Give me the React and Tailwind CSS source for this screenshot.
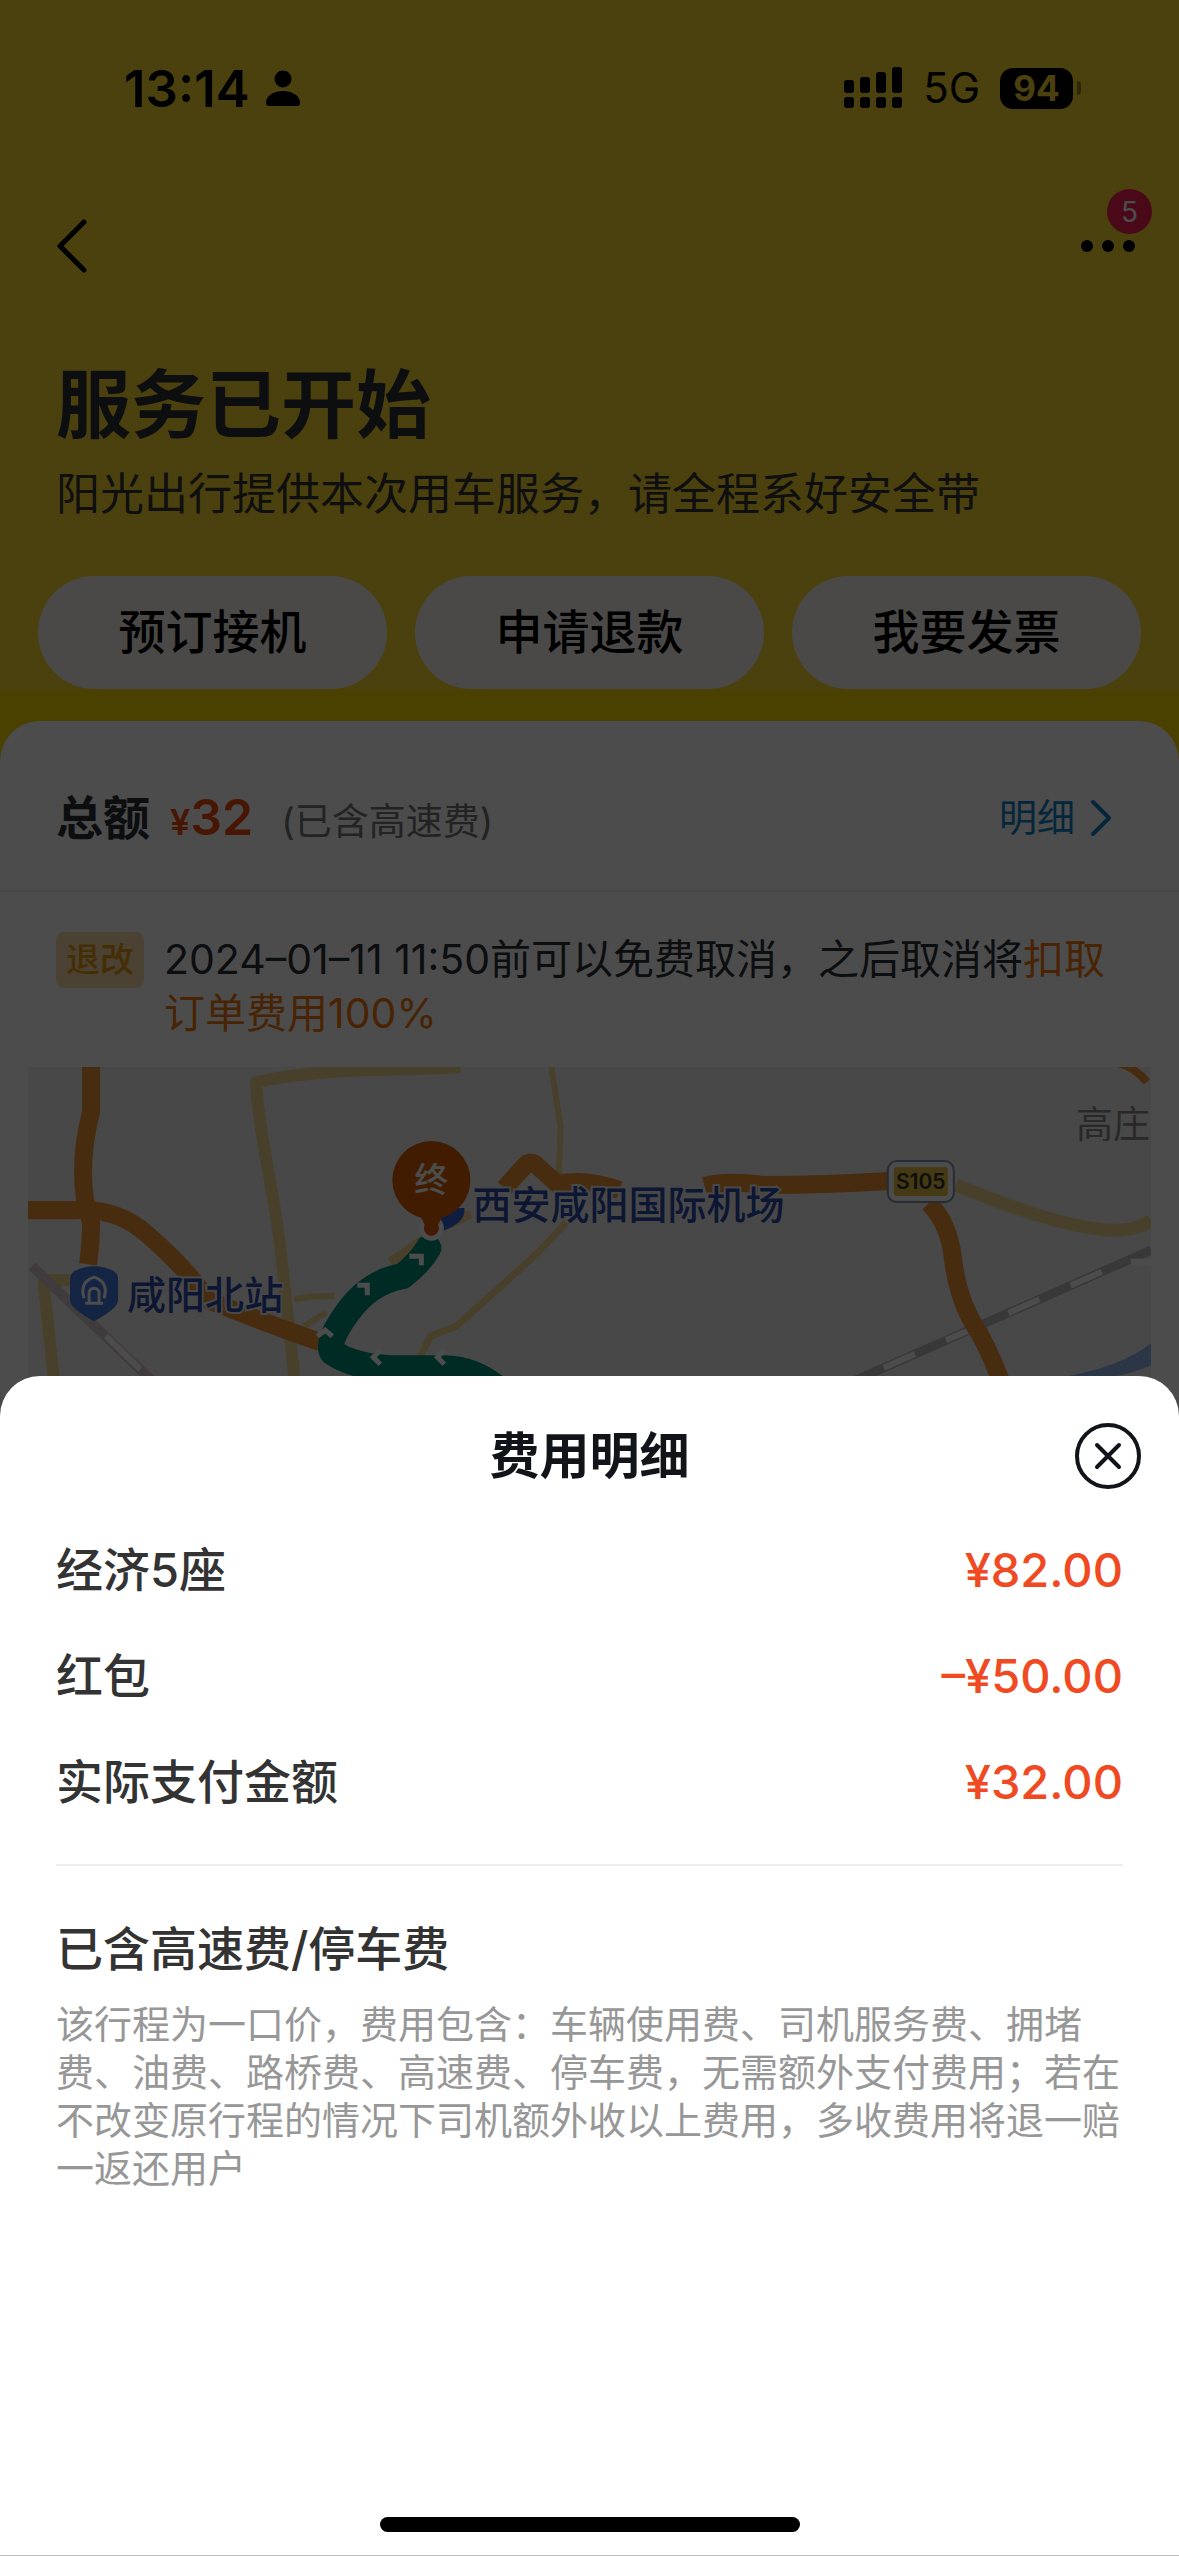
import { useState } from "react";

const actions = ["预订接机", "申请退款", "我要发票"];

const fees = [
  { label: "经济5座", amount: "¥82.00" },
  { label: "红包", amount: "–¥50.00" },
  { label: "实际支付金额", amount: "¥32.00" },
];

function StatusBar() {
  return (
    <div className="flex h-[176px] items-center justify-between pl-[124px] pr-[98px]">
      <div className="flex items-center gap-4">
        <span className="text-[51px] font-semibold leading-none">13:14</span>
        <svg className="h-[38px] w-[34px]" viewBox="0 0 34 38" fill="currentColor">
          <circle cx="17" cy="10" r="8.5" />
          <path d="M0 33C1 26 8 22 17 22s16 4 17 11c0 3-1 4-3 4H3c-2 0-3-1-3-4Z" />
        </svg>
      </div>
      <div className="flex items-center gap-5">
        <svg className="h-[42px] w-[60px]" viewBox="0 0 60 42" fill="currentColor">
          <rect x="1" y="13" width="10" height="13" rx="3" />
          <rect x="17" y="10" width="10" height="16" rx="3" />
          <rect x="33" y="5" width="10" height="21" rx="3" />
          <rect x="49" y="0" width="10" height="26" rx="3" />
          <rect x="1" y="30" width="10" height="11" rx="3" />
          <rect x="17" y="30" width="10" height="11" rx="3" />
          <rect x="33" y="30" width="10" height="11" rx="3" />
          <rect x="49" y="30" width="10" height="11" rx="3" />
        </svg>
        <span className="text-[42px] leading-none">5G</span>
        <div className="flex items-center gap-1">
          <span className="flex h-[41px] w-[73px] items-center justify-center rounded-[13px] bg-black text-[35px] font-bold leading-none text-[#fad932]">
            94
          </span>
          <span className="h-[14px] w-[4px] rounded-r-full bg-black/40" />
        </div>
      </div>
    </div>
  );
}

function NavBar() {
  return (
    <nav className="flex h-[140px] items-center justify-between px-[44px]">
      <button aria-label="返回" className="p-2">
        <svg className="h-[56px] w-[40px]" viewBox="0 0 40 56" fill="none" stroke="currentColor" strokeWidth="5" strokeLinecap="round" strokeLinejoin="round">
          <path d="M32 4 8 28l24 24" />
        </svg>
      </button>
      <button aria-label="更多" className="relative flex items-center gap-[9px]">
        <span className="size-[12px] rounded-full bg-black" />
        <span className="size-[12px] rounded-full bg-black" />
        <span className="size-[12px] rounded-full bg-black" />
        <span className="absolute -right-[17px] -top-[51px] flex size-[45px] items-center justify-center rounded-full bg-[#f51e50] text-[28px] text-white">
          5
        </span>
      </button>
    </nav>
  );
}

function RouteMap() {
  return (
    <svg className="block w-full" viewBox="28 1067 1122 330" fill="none">
      <rect x="28" y="1067" width="1122" height="330" fill="#f2f2f2" />

      {/* minor roads */}
      <g stroke="#f2d68c" strokeWidth="10" strokeLinejoin="round">
        <path d="M460 1067C400 1072 330 1066 256 1082c2 50 18 110 24 165l10 90 6 60" strokeWidth="12" />
        <path d="M551 1067l9 60-2 60" strokeWidth="6" />
        <path d="M84 1280H48q-6 0-4 8l12 110" strokeWidth="12" />
        <path d="M294 1299q20-4 40-3M304 1326l22-14" strokeWidth="6" />
        <path d="M568 1220l-30 32-44 40-38 34-26 10-12 24v40" strokeWidth="7" />
        <path d="M390 1262l46-32 34-16" strokeWidth="9" />
        <path d="M955 1185c50 20 120 47 165 45q20-2 30-10" strokeWidth="13" />
      </g>

      {/* railways */}
      <path d="M32 1266l130 124" stroke="#d8c8cc" strokeWidth="10" />
      <path d="M106 1336l34 33" stroke="#fff" strokeWidth="6" />
      <path d="M1150 1250 850 1382" stroke="#bdbdbd" strokeWidth="9" />
      <path d="M1132 1258 850 1382" stroke="#fff" strokeWidth="6" strokeDasharray="34 34" strokeDashoffset="34" />
      <path d="M1130 1262h20" stroke="#fff" strokeWidth="7" />
      <path d="M1060 1377q60-10 90-34v22q-30 14-90 18Z" fill="#8fb4ea" />

      {/* highways */}
      <g stroke="#f09435" strokeWidth="18" strokeLinejoin="round">
        <path d="M91 1067v45q-8 30-8 60 0 30 8 50 0 20-3 42" />
        <path d="M28 1210h50q40-2 70 25 40 35 60 65 50 20 112 42" />
        <path d="M504 1188l20-22q6-7 13 0l20 18q28-6 62 6M704 1186q20-6 60-1 60 0 124-4M928 1203q20 20 24 54 5 45 26 75 16 30 26 60" />
        <path d="M1112 1062q20 3 34 20" strokeWidth="8" />
      </g>

      {/* planned route */}
      <path d="M428 1248q-8 14-26 28-34 6-56 38-20 28-14 38 20 14 58 16h54q34 0 64 30" stroke="#008f78" strokeWidth="26" strokeLinecap="round" strokeLinejoin="round" />
      <g stroke="#fff" strokeWidth="5">
        <path d="M409 1256h12v9M357 1285h10v10M317 1336l8-6 7 6M380 1350l-7 7 7 7M444 1350l-7 7 7 7" />
      </g>

      <path d="M418 1208h46q2 16-26 24Z" fill="#3364d8" />
      <circle cx="431" cy="1228" r="10" fill="#e8501a" stroke="#fff" strokeWidth="5" />
      <circle cx="431" cy="1180" r="39" fill="#d95f00" />
      <path d="M418 1212h26l-9 18h-8Z" fill="#d95f00" />

      <path d="M76 1270q18-8 36 0 6 2 6 10v20q0 8-24 21-24-13-24-21v-20q0-8 6-10Z" fill="#4478e0" />
      <path d="M85 1303h18M89 1302v-9a5 5 0 0 1 10 0v9M84 1298q-5-16 10-21 15 5 10 21" stroke="#fff" strokeWidth="3" />

      <rect x="887" y="1161" width="66" height="41" rx="9" fill="#fff" stroke="#8090b0" strokeWidth="2" />
      <rect x="893" y="1167" width="54" height="29" rx="3" fill="#e8c440" />
      <g className="font-['Inter','Noto_Sans_CJK_SC',sans-serif]">
        <text x="431" y="1192" fontSize="34" fontWeight="500" textAnchor="middle" fill="#fff">终</text>
        <text x="920" y="1189" fontSize="21" fontWeight="600" textAnchor="middle" fill="#333">S105</text>
        <text x="472" y="1219" fontSize="39" fontWeight="500" fill="#2c4aa8" stroke="#f2f2f2" strokeWidth="4" paintOrder="stroke">西安咸阳国际机场</text>
        <text x="127" y="1309" fontSize="39" fontWeight="500" fill="#2c4aa8" stroke="#f2f2f2" strokeWidth="4" paintOrder="stroke">咸阳北站</text>
        <text x="1075" y="1138" fontSize="37" fill="#8a8a8a">高庄</text>
      </g>
    </svg>
  );
}

function FeeSheet({ onClose }) {
  return (
    <section
      role="dialog"
      aria-labelledby="fee-title"
      className="absolute inset-x-0 bottom-0 flex min-h-[1180px] flex-col rounded-t-[40px] border-b border-[#c0c0c0] bg-white"
    >
      <header className="grid grid-cols-[66px_1fr_66px] items-center px-[38px] pt-[47px]">
        <h2 id="fee-title" className="col-start-2 text-center text-[50px] font-bold leading-[66px] text-[#111418]">
          费用明细
        </h2>
        <button aria-label="关闭" onClick={onClose}>
          <svg className="size-[66px]" viewBox="0 0 66 66" fill="none" stroke="#111418" strokeWidth="4" strokeLinecap="round">
            <circle cx="33" cy="33" r="31" />
            <path d="m22 22 22 22M44 22 22 44" />
          </svg>
        </button>
      </header>

      <div className="px-[56px] pt-[28px]">
        <dl className="border-b-2 border-[#eeeeee] pb-[29px]">
          {fees.map((fee) => (
            <div key={fee.label} className="flex h-[106px] items-center justify-between text-[47px] font-medium">
              <dt className="text-[#333333]">{fee.label}</dt>
              <dd className="text-[#f04a23]">{fee.amount}</dd>
            </div>
          ))}
        </dl>
      </div>

      <div className="pl-[56px] pr-[48px] pt-[48px]">
        <h3 className="text-[47px] font-medium leading-[70px] text-[#333333]">已含高速费/停车费</h3>
        <p className="mt-4 text-[38px] leading-[48px] text-[#979797]">
          该行程为一口价，费用包含：车辆使用费、司机服务费、拥堵费、油费、路桥费、高速费、停车费，无需额外支付费用；若在不改变原行程的情况下司机额外收以上费用，多收费用将退一赔一返还用户
        </p>
      </div>

      <div className="mx-auto mb-[23px] mt-auto h-[15px] w-[420px] rounded-full bg-black" />
    </section>
  );
}

export default function App() {
  const [sheetOpen, setSheetOpen] = useState(true);

  return (
    <div className="relative min-h-screen overflow-hidden bg-[#f5f5f5] font-['Inter','Noto_Sans_CJK_SC',sans-serif]">
      <div className="bg-linear-to-b from-[#fad932] from-90% to-[#f8d800] to-91% pb-[72px] text-black">
        <StatusBar />
        <NavBar />
        <div className="px-[56px] pt-[34px]">
          <h1 className="text-[75px] font-bold leading-[110px] text-[#2b2f38]">服务已开始</h1>
          <p className="mt-1 text-[44px] leading-[60px] text-[#333333]">
            阳光出行提供本次用车服务，请全程系好安全带
          </p>
        </div>
        <div className="mt-[52px] grid grid-cols-3 gap-7 px-[38px]">
          {actions.map((action) => (
            <button key={action} className="h-[113px] rounded-full bg-[#f9f6ee] text-[47px] font-medium">
              {action}
            </button>
          ))}
        </div>
      </div>

      <main className="relative -mt-10 rounded-t-[40px] bg-white">
        <div className="flex h-[171px] items-center justify-between border-b-2 border-[#eeeeee] pl-[56px] pr-[64px] pt-[24px]">
          <div className="flex items-baseline">
            <span className="text-[47px] font-bold text-[#2b2f38]">总额</span>
            <span className="ml-5 text-[36px] font-semibold text-[#f04a0f]">¥</span>
            <span className="text-[50px] font-semibold text-[#f04a0f]">32</span>
            <span className="ml-7 text-[37px] text-[#777777]">(已含高速费)</span>
          </div>
          <button className="flex items-center gap-3 text-[38px] text-[#1284c8]" onClick={() => setSheetOpen(true)}>
            明细
            <svg className="h-[40px] w-[28px]" viewBox="0 0 28 40" fill="none" stroke="currentColor" strokeWidth="4" strokeLinecap="round" strokeLinejoin="round">
              <path d="m6 4 16 16L6 36" />
            </svg>
          </button>
        </div>
        <div className="flex items-start gap-5 px-[56px] pb-[27px] pt-[40px]">
          <span className="shrink-0 rounded-[8px] bg-[#fadcb0] px-[10px] text-[34px] font-medium leading-[56px] text-[#e89c10]">
            退改
          </span>
          <p className="text-[41px] leading-[54px] text-[#2b2f38]">
            2024–01–11 11:50前可以免费取消，之后取消将
            <span className="text-[#f57a10]">扣取订单费用100%</span>
          </p>
        </div>
        <div className="px-7">
          <RouteMap />
        </div>
      </main>

      {sheetOpen && (
        <>
          <div className="absolute inset-0 bg-black/70" />
          <FeeSheet onClose={() => setSheetOpen(false)} />
        </>
      )}
    </div>
  );
}
